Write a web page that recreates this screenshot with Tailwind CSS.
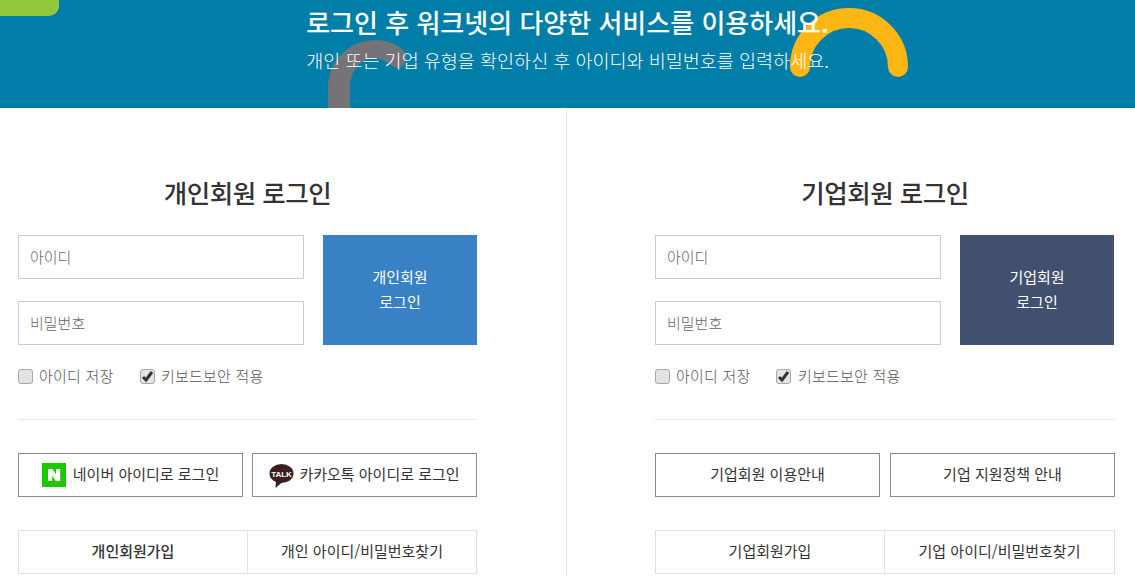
<!DOCTYPE html>
<html lang="ko">
<head>
  <meta charset="UTF-8" />
  <title>로그인</title>
  <script src="https://cdn.jsdelivr.net/npm/@tailwindcss/browser@4"></script>
</head>
<body class="bg-white font-['Noto_Sans_CJK_KR','Noto_Sans',sans-serif] text-[#333]">
  <div class="h-[576px] w-[1135px] overflow-hidden">
    <header class="relative h-[108px] overflow-hidden bg-[#007ea7] text-center text-white">
      <div class="absolute left-0 top-0 h-[16px] w-[59px] rounded-br-[10px] bg-[#93c83e]"></div>
      <svg class="absolute left-0 top-0" width="1135" height="108" fill="none">
        <path d="M328 108V88C328 60 350 40 376 40C387 40 397 44 404 51C408 58 405 67 398 68C392 68 388 60 376 58C362 57 350 70 350 88V108Z" fill="#737378" />
        <path d="M800 67A49 49 0 0 1 898 67" stroke="#fdb614" stroke-width="20" stroke-linecap="round" />
      </svg>
      <div class="relative pt-[4px]">
        <h1 class="text-[26px] font-medium leading-[36px]">로그인 후 워크넷의 다양한 서비스를 이용하세요.</h1>
        <p class="mt-[2px] text-[18.500px] font-light leading-[36px]">개인 또는 기업 유형을 확인하신 후 아이디와 비밀번호를 입력하세요.</p>
      </div>
    </header>

    <main class="flex h-[468px]">
      <section class="h-full w-[567px] border-r border-[#e5e5e5] pl-[18px] pr-[89px]">
        <h2 class="pt-[66px] pb-[25px] text-center text-[25.500px] font-medium leading-[36px] tracking-[-0.5px]">개인회원 로그인</h2>
        <div class="flex justify-between">
          <div class="flex w-[286px] flex-col gap-[22px]">
            <input type="text" placeholder="아이디" class="h-[44px] border border-[#ccc] px-[11px] pb-[2px] text-[15px] font-light placeholder:text-[#666]" />
            <input type="password" placeholder="비밀번호" class="h-[44px] border border-[#ccc] px-[11px] pb-[2px] text-[15px] font-light placeholder:text-[#666]" />
          </div>
          <button class="h-[110px] w-[154px] bg-[#3781c4] pb-[2px] text-[15px] leading-[25px] text-white">개인회원<br />로그인</button>
        </div>
        <div class="mt-[20px] flex h-[22px] items-center text-[15px] font-light tracking-[0.2px] text-[#555]">
          <label class="flex w-[122px] items-center gap-[6px]">
            <span class="h-[15px] w-[15px] rounded-[3px] border border-[#a8a8a8] bg-[#e4e4e4]"></span>아이디 저장
          </label>
          <label class="flex items-center gap-[6px]">
            <span class="flex h-[15px] w-[15px] items-center justify-center rounded-[3px] border border-[#a8a8a8] bg-[#e4e4e4]">
              <svg width="13" height="13" viewBox="0 0 13 13" fill="none"><path d="M2 7l3 3 6-8" stroke="#333" stroke-width="3" /></svg>
            </span>키보드보안 적용
          </label>
        </div>
        <div class="mt-[32px] border-t border-[#e5e5e5]"></div>
        <div class="mt-[33px] flex justify-between">
          <a class="flex h-[44px] w-[225px] items-center justify-center gap-[7px] border border-[#858b9a] pb-[2px] text-[15px]">
            <svg class="mt-[2px]" width="24" height="24" viewBox="0 0 24 24"><rect width="24" height="24" fill="#1ec800" /><path d="M6 6h4.500l3.500 5.200V6h4.200v12h-4.500l-3.500-5.200V18H6z" fill="#fff" /></svg>
            네이버 아이디로 로그인
          </a>
          <a class="flex h-[44px] w-[225px] items-center justify-center gap-[5px] border border-[#858b9a] pb-[2px] text-[15px]">
            <svg class="mt-[2px]" width="25" height="25" viewBox="0 0 25 25">
              <ellipse cx="12.500" cy="10.500" rx="12" ry="9.500" fill="#3c1e1e" />
              <path d="M7 17l-.5 8 7-6z" fill="#3c1e1e" />
              <text x="12.500" y="13.500" text-anchor="middle" font-size="8" font-weight="700" fill="#fff" font-family="Liberation Sans, sans-serif">TALK</text>
            </svg>
            카카오톡 아이디로 로그인
          </a>
        </div>
        <div class="mt-[33px] flex h-[44px] border border-[#e0e0e0] text-[15px]">
          <a class="flex w-[229px] items-center justify-center border-r border-[#e0e0e0] pb-[2px] font-medium">개인회원가입</a>
          <a class="flex flex-1 items-center justify-center pb-[2px]">개인 아이디/비밀번호찾기</a>
        </div>
      </section>

      <section class="h-full w-[568px] pl-[88px] pr-[20px]">
        <h2 class="pt-[66px] pb-[25px] text-center text-[25.500px] font-medium leading-[36px] tracking-[-0.5px]">기업회원 로그인</h2>
        <div class="mr-[1px] flex justify-between">
          <div class="flex w-[286px] flex-col gap-[22px]">
            <input type="text" placeholder="아이디" class="h-[44px] border border-[#ccc] px-[11px] pb-[2px] text-[15px] font-light placeholder:text-[#666]" />
            <input type="password" placeholder="비밀번호" class="h-[44px] border border-[#ccc] px-[11px] pb-[2px] text-[15px] font-light placeholder:text-[#666]" />
          </div>
          <button class="h-[110px] w-[154px] bg-[#41506f] pb-[2px] text-[15px] leading-[25px] text-white">기업회원<br />로그인</button>
        </div>
        <div class="mt-[20px] flex h-[22px] items-center text-[15px] font-light tracking-[0.2px] text-[#555]">
          <label class="flex w-[121px] items-center gap-[6px]">
            <span class="h-[15px] w-[15px] rounded-[3px] border border-[#a8a8a8] bg-[#e4e4e4]"></span>아이디 저장
          </label>
          <label class="flex items-center gap-[7px]">
            <span class="flex h-[15px] w-[15px] items-center justify-center rounded-[3px] border border-[#a8a8a8] bg-[#e4e4e4]">
              <svg width="13" height="13" viewBox="0 0 13 13" fill="none"><path d="M2 7l3 3 6-8" stroke="#333" stroke-width="3" /></svg>
            </span>키보드보안 적용
          </label>
        </div>
        <div class="mt-[32px] border-t border-[#e5e5e5]"></div>
        <div class="mt-[33px] flex justify-between">
          <a class="flex h-[44px] w-[225px] items-center justify-center border border-[#858b9a] pb-[2px] text-[15px]">기업회원 이용안내</a>
          <a class="flex h-[44px] w-[225px] items-center justify-center border border-[#858b9a] pb-[2px] text-[15px]">기업 지원정책 안내</a>
        </div>
        <div class="mt-[33px] flex h-[44px] border border-[#e0e0e0] text-[15px]">
          <a class="flex w-[229px] items-center justify-center border-r border-[#e0e0e0] pb-[2px]">기업회원가입</a>
          <a class="flex flex-1 items-center justify-center pb-[2px]">기업 아이디/비밀번호찾기</a>
        </div>
      </section>
    </main>
  </div>
</body>
</html>
